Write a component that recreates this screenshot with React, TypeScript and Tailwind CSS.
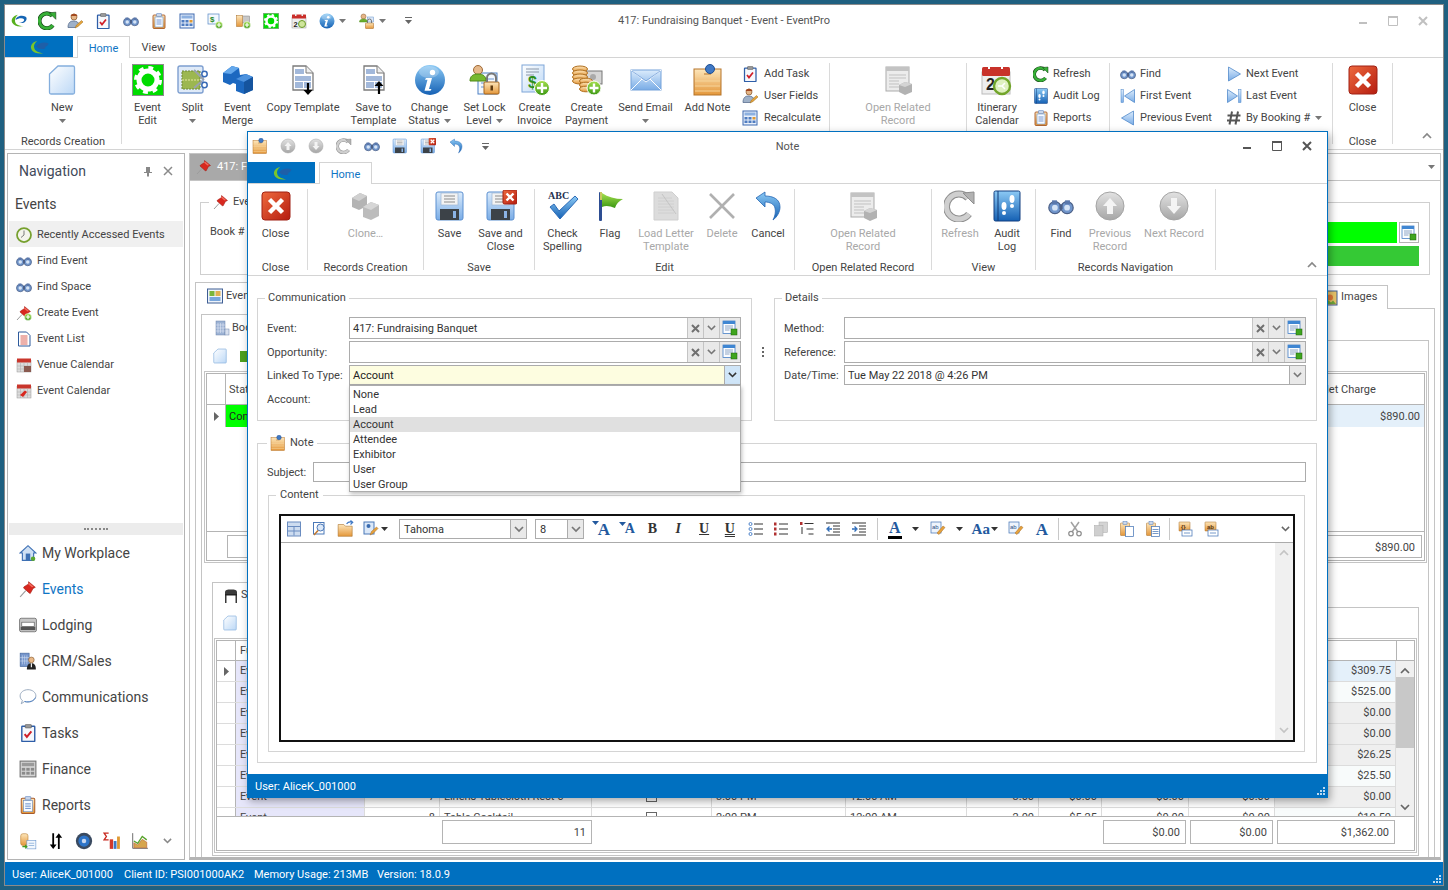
import React from "react";

type P = { s?: number };
type CP = P & { children?: React.ReactNode };
const Ic = ({ s = 32, children }: CP) => (
  <svg width={s} height={s} viewBox="0 0 32 32" className="block shrink-0">{children}</svg>
);

const Defs = () => (
  <svg className="absolute w-0 h-0">
    <defs>
      <linearGradient id="gB" x1="0" y1="0" x2="0" y2="1"><stop offset="0" stopColor="#dcecfc" /><stop offset="1" stopColor="#79ace6" /></linearGradient>
      <linearGradient id="gP" x1="0" y1="0" x2="1" y2="1"><stop offset="0" stopColor="#ffffff" /><stop offset="1" stopColor="#bcd8f6" /></linearGradient>
      <linearGradient id="gO" x1="0" y1="0" x2="0" y2="1"><stop offset="0" stopColor="#fde6bb" /><stop offset="1" stopColor="#e4973a" /></linearGradient>
      <linearGradient id="gR" x1="0" y1="0" x2="1" y2="1"><stop offset="0" stopColor="#ee6a3e" /><stop offset="1" stopColor="#b51c10" /></linearGradient>
      <linearGradient id="gG" x1="0" y1="0" x2="0" y2="1"><stop offset="0" stopColor="#e2e2e2" /><stop offset="1" stopColor="#a6a6a6" /></linearGradient>
      <linearGradient id="gD" x1="0" y1="0" x2="0" y2="1"><stop offset="0" stopColor="#8ccaf5" /><stop offset="1" stopColor="#1561b4" /></linearGradient>
      <linearGradient id="gN" x1="0" y1="0" x2="0" y2="1"><stop offset="0" stopColor="#a6e04e" /><stop offset="1" stopColor="#3a9712" /></linearGradient>
    </defs>
  </svg>
);

const PlusDot = ({ x = 24, y = 24, r = 7 }: { x?: number; y?: number; r?: number }) => (
  <g>
    <circle cx={x} cy={y} r={r} fill="url(#gN)" stroke="#fff" strokeWidth="1" />
    <path d={`M${x - r + 2.5} ${y}h${2 * r - 5}M${x} ${y - r + 2.5}v${2 * r - 5}`} stroke="#fff" strokeWidth="2.4" />
  </g>
);

const Logo = ({ s = 20 }: P) => (
  <svg width={s} height={s} viewBox="0 0 32 32" className="block shrink-0">
    <path d="M14 7C5 9 2 16 6 21c3 4 9 5 16 4-7-1-12-3-13-8-1-4 2-8 5-10z" fill="#7ac52c" />
    <path d="M12 15c3-5 12-7 18-4-1 3-3 4-5 5 1 2-1 3-4 3-4 0-7-1-9-4z" fill="#1e5fa8" />
  </svg>
);
const LogoQ = ({ s = 16 }: P) => (
  <svg width={s + 2} height={s} viewBox="0 0 32 28" className="block shrink-0">
    <path d="M14 3C5 5 1 12 4 17c3 5 10 8 20 6-9 0-14-3-15-8-1-5 2-9 5-12z" fill="#58b01e" />
    <path d="M10 12c1-6 10-9 17-6 4 2 3 7-1 10-3 2-7 2-10 1 3 0 8-1 9-4 1-2-1-4-5-4-4 0-7 1-10 3z" fill="#1565b4" />
  </svg>
);

const NewPage = ({ s = 32 }: P) => (
  <Ic s={s}><path d="M12 2h15a1.500 1.500 0 0 1 1.500 1.500v25a1.500 1.500 0 0 1-1.500 1.500H5a1.500 1.500 0 0 1-1.500-1.500V10z" fill="url(#gP)" stroke="#84aedd" strokeWidth="1.300" /></Ic>
);
const GearBox = ({ s = 32 }: P) => (
  <Ic s={s}>
    <rect x="0.500" y="0.500" width="31" height="31" fill="#00dc00" stroke="#8c8c8c" />
    <circle cx="16" cy="16" r="12" fill="none" stroke="#fff" strokeWidth="4" strokeDasharray="4.700 4.720" />
    <circle cx="16" cy="16" r="9" fill="#00dc00" stroke="#fff" strokeWidth="5" />
  </Ic>
);
const Split = ({ s = 32 }: P) => (
  <Ic s={s}>
    <rect x="1" y="2" width="25" height="27" rx="2" fill="#dfeaf8" stroke="#7e9fd0" strokeWidth="1.400" />
    <rect x="5" y="7" width="18" height="18" fill="#9cb750" stroke="#6f8a35" strokeDasharray="2 1" />
    <path d="M5 16h18" stroke="#e6e8a0" strokeDasharray="2 1" />
    <path d="M17 6l10 10M17 24l8-7" stroke="#9aa2ad" strokeWidth="2" />
    <circle cx="27.500" cy="10" r="2.700" fill="#fff" stroke="#3a6bb5" strokeWidth="1.500" />
    <circle cx="27.500" cy="21" r="2.700" fill="#fff" stroke="#3a6bb5" strokeWidth="1.500" />
  </Ic>
);
const Merge = ({ s = 32 }: P) => (
  <Ic s={s}>
    <path d="M1 9l9-7 7 2 1 7 6-1 7 3v13l-9 4-8-3v-7l-3-1-3 2-7-3z" fill="#1c68c0" />
    <path d="M1 9l9-7 7 2-8 6z" fill="#64a8ec" />
    <path d="M14 15l10-5 7 3-9 5z" fill="#4d92de" />
    <path d="M22 18l9-5v13l-9 4z" fill="#15549e" />
  </Ic>
);
const Tmpl = ({ s = 32, up = false }: P & { up?: boolean }) => (
  <Ic s={s}>
    <path d="M6 2h13l7 7v17H6z" fill="#fff" stroke="#7b7b7b" strokeWidth="1.300" />
    <path d="M19 2v7h7" fill="#eee" stroke="#7b7b7b" />
    <path d="M8 5h9v5H8zM8 12h16v5H8zM8 18h8v6H8zM17 18h7v6h-7z" fill="#a2b8da" />
    {up ? (
      <g><path d="M21 20v10" stroke="#000" strokeWidth="2.200" /><path d="M16.500 22l4.500-5 4.500 5z" fill="#000" /></g>
    ) : (
      <g><path d="M21 19v9" stroke="#000" strokeWidth="2.200" /><path d="M16.500 26l4.500 5 4.500-5z" fill="#000" /></g>
    )}
  </Ic>
);
const Info = ({ s = 32 }: P) => (
  <Ic s={s}>
    <circle cx="16" cy="16" r="15" fill="url(#gD)" />
    <ellipse cx="15" cy="8" rx="10" ry="6" fill="#fff" opacity=".25" />
    <circle cx="18.500" cy="8.500" r="2.700" fill="#fff" />
    <path d="M12 14h6l-3 11h2.500l-1 1.800H10.500l3-11H11z" fill="#fff" />
  </Ic>
);
const LockDoc = ({ s = 32 }: P) => (
  <Ic s={s}>
    <rect x="9" y="9" width="19" height="21" fill="#f4f8fd" stroke="#4c80c4" />
    <path d="M12 15h13M12 19h13M12 23h9" stroke="#6a97d4" />
    <circle cx="9" cy="6" r="4.500" fill="#e6b98b" stroke="#a06a36" />
    <path d="M1 17c0-5 3-7 8-7s8 2 8 7z" fill="#76b82e" stroke="#4f8a18" />
    <rect x="15" y="18" width="15" height="12" rx="1" fill="url(#gO)" stroke="#a4641c" />
    <path d="M18 18v-4a4.500 4.500 0 0 1 9 0v4" fill="none" stroke="#777" strokeWidth="2" />
    <rect x="21.500" y="21.500" width="2.500" height="5" fill="#5e3a10" />
  </Ic>
);
const Invoice = ({ s = 32 }: P) => (
  <Ic s={s}>
    <rect x="3" y="1" width="22" height="27" fill="url(#gP)" stroke="#7ea6d8" />
    <path d="M7 5h13M7 8h13M7 11h8" stroke="#8a97a8" />
    <text x="9" y="24" fontFamily="Liberation Sans" fontWeight="700" fontSize="16" fill="#2d8f1c">$</text>
    <PlusDot x={23} y={24} r={7.500} />
  </Ic>
);
const Payment = ({ s = 32 }: P) => (
  <Ic s={s}>
    <rect x="14" y="7" width="17" height="13" fill="#d6d6d6" stroke="#777" />
    <circle cx="22" cy="13" r="3" fill="#aaa" />
    {[3, 7, 11, 15].map((y) => <ellipse key={y} cx="9" cy={y + 2} rx="7.500" ry="3" fill="url(#gO)" stroke="#b06f1f" />)}
    {[15, 19, 23].map((y) => <ellipse key={y} cx="15" cy={y + 2} rx="6.500" ry="2.800" fill="url(#gO)" stroke="#b06f1f" />)}
    <PlusDot x={23} y={24} r={7} />
  </Ic>
);
const Mail = ({ s = 32 }: P) => (
  <Ic s={s}>
    <rect x="1" y="6" width="30" height="20" fill="url(#gB)" stroke="#74a2da" />
    <path d="M1 6l15 12L31 6M1 26l11-11M31 26L20 15" fill="none" stroke="#fff" strokeWidth="1" />
    <path d="M2 7l14 10L30 7" fill="none" stroke="#5f91d2" strokeWidth=".7" />
  </Ic>
);
const NoteIc = ({ s = 32 }: P) => (
  <Ic s={s}>
    <rect x="2" y="5" width="27" height="26" fill="url(#gO)" stroke="#b5752a" />
    <path d="M3 12h25M3 17h25M3 22h25M3 27h25" stroke="#f6d49a" />
    <path d="M12 10h7" stroke="#b5752a" />
    <circle cx="18" cy="5" r="4.500" fill="#3f78c4" stroke="#1e4e92" />
  </Ic>
);
const OpenRel = ({ s = 32 }: P) => (
  <Ic s={s}>
    <rect x="4" y="3" width="23" height="24" fill="#ececec" stroke="#ababab" />
    <rect x="4" y="3" width="23" height="4" fill="#c3c3c3" />
    <path d="M7 11h17M7 14h17M7 17h10M7 20h10M7 23h10" stroke="#c1c1c1" />
    <path d="M17 21l6-3 7 2v8l-7 3-6-3z" fill="#b2b2b2" />
    <path d="M17 21l6-3 7 2-7 3z" fill="#d4d4d4" />
  </Ic>
);
const Calendar = ({ s = 32 }: P) => (
  <Ic s={s}>
    <rect x="1" y="8" width="28" height="22" fill="#eee" stroke="#bbb" />
    <rect x="1" y="3" width="28" height="9" rx="1.500" fill="#c8322a" />
    <rect x="7" y="1" width="2" height="4" fill="#fff" /><rect x="20" y="1" width="2" height="4" fill="#fff" />
    <text x="5" y="26" fontFamily="Liberation Sans" fontWeight="700" fontSize="16" fill="#222">2</text>
    <circle cx="21" cy="22" r="8" fill="#dff0c0" stroke="#72a52a" strokeWidth="2.400" />
    <path d="M17 22h4l3-3M21 22l3 3" stroke="#fff" strokeWidth="1.500" fill="none" />
  </Ic>
);
const CloseIc = ({ s = 32 }: P) => (
  <Ic s={s}>
    <rect x="2" y="2" width="28" height="28" rx="3" fill="url(#gR)" stroke="#a02114" />
    <path d="M9.500 9.500l13 13M22.500 9.500l-13 13" stroke="#fff" strokeWidth="4.500" />
  </Ic>
);
const Clone = ({ s = 32 }: P) => (
  <Ic s={s}>
    <path d="M2 8l8-5 7 3v10l-8 4-7-3z" fill="#b4b4b4" /><path d="M2 8l8-5 7 3-8 5z" fill="#d0d0d0" />
    <path d="M13 17l8-5 8 3v11l-8 4-8-3z" fill="#bcbcbc" /><path d="M13 17l8-5 8 3-8 5z" fill="#d6d6d6" />
  </Ic>
);
const Floppy = ({ s = 32, x = false }: P & { x?: boolean }) => (
  <Ic s={s}>
    <rect x="2" y="2" width="27" height="28" rx="2" fill="url(#gB)" stroke="#5b8fd0" />
    <rect x="7" y="3" width="17" height="12" fill="#f3f3f3" stroke="#9cb5d3" strokeWidth=".7" />
    <path d="M10 6h11M10 9h11M10 12h11" stroke="#8b8b8b" />
    <rect x="6" y="19" width="19" height="11" fill="#3c4248" />
    <rect x="19" y="21" width="3" height="7" fill="#8cb4e6" />
    {x && <g><rect x="18" y="0" width="14" height="14" rx="1.500" fill="url(#gR)" stroke="#a02114" /><path d="M21.500 3.500l7 7M28.500 3.500l-7 7" stroke="#fff" strokeWidth="2.400" /></g>}
  </Ic>
);
const CheckAbc = ({ s = 32 }: P) => (
  <Ic s={s}>
    <text x="1" y="9" fontFamily="Liberation Serif" fontWeight="700" fontSize="10" fill="#26324f">ABC</text>
    <path d="M3 17l4-3 5 7L28 6l3 3-18 20z" fill="url(#gD)" stroke="#2d6cb8" />
  </Ic>
);
const Flag = ({ s = 32 }: P) => (
  <Ic s={s}>
    <rect x="5" y="2" width="3" height="29" rx="1" fill="#2d4d92" />
    <path d="M8 3c6 4 13 6 21 6-4 2-7 5-8 9-5-2-9-3-13-1z" fill="url(#gN)" />
    <path d="M6 2h2v8H6z" fill="#c7c860" />
  </Ic>
);
const LoadLetter = ({ s = 32 }: P) => (
  <Ic s={s}>
    <path d="M4 2h18l6 6v22H4z" fill="#dcdcdc" stroke="#cfcfcf" />
    <path d="M8 8h14M8 11h16M8 14h16M8 17h16M8 20h16M8 23h16" stroke="#cbcbcb" strokeWidth=".8" />
    <path d="M12 4l14 20" stroke="#c4c4c4" />
  </Ic>
);
const DelX = ({ s = 32 }: P) => (
  <Ic s={s}><path d="M4 4l24 24M28 4L4 28" stroke="#b0b0b0" strokeWidth="2.600" /></Ic>
);
const Undo = ({ s = 32 }: P) => (
  <Ic s={s}>
    <path d="M4 8l9-6v4c8 0 15 3 15 11 0 5-3 10-7 13 2-4 3-8 2-12-1-4-5-6-10-6v5z" fill="url(#gD)" stroke="#2566b4" strokeWidth=".8" />
  </Ic>
);
const Refresh = ({ s = 32, gray = false }: P & { gray?: boolean }) => (
  <Ic s={s}>
    <path d="M24 8a12.500 12.500 0 1 0 1 16" fill="none" stroke={gray ? "#8e8e8e" : "#133d13"} strokeWidth="7" />
    <path d="M24 8a12.500 12.500 0 1 0 1 16" fill="none" stroke={gray ? "#cfcfcf" : "#37b037"} strokeWidth="5" />
    <path d="M19 3l11-1v12z" fill={gray ? "#b2b2b2" : "#37b037"} stroke={gray ? "#8e8e8e" : "#133d13"} />
  </Ic>
);
const Book = ({ s = 32 }: P) => (
  <Ic s={s}>
    <rect x="3" y="1" width="26" height="30" rx="1.500" fill="url(#gD)" stroke="#123f80" />
    <path d="M7 1v30" stroke="#0e3a78" />
    <ellipse cx="13" cy="16" rx="2.500" ry="4" fill="#fff" /><circle cx="13" cy="23" r="2" fill="#fff" />
    <ellipse cx="21" cy="9" rx="2.500" ry="4" fill="#fff" /><circle cx="21" cy="16" r="2" fill="#fff" />
  </Ic>
);
const Binoc = ({ s = 32 }: P) => (
  <Ic s={s}>
    <circle cx="8.500" cy="18" r="7.500" fill="#7196cc" stroke="#4b5f86" strokeWidth="1.500" />
    <circle cx="23.500" cy="18" r="7.500" fill="#7196cc" stroke="#4b5f86" strokeWidth="1.500" />
    <circle cx="8.500" cy="18" r="3.500" fill="#d6e4f6" /><circle cx="23.500" cy="18" r="3.500" fill="#d6e4f6" />
    <rect x="5" y="9" width="6" height="5" fill="#5a78ac" /><rect x="21" y="9" width="6" height="5" fill="#5a78ac" />
    <rect x="14" y="14" width="4" height="6" fill="#4b5f86" />
  </Ic>
);
const Round = ({ s = 32, down = false }: P & { down?: boolean }) => (
  <Ic s={s}>
    <circle cx="16" cy="16" r="14" fill="url(#gG)" stroke="#a4a4a4" />
    <g transform={down ? "rotate(180 16 16)" : undefined}>
      <path d="M16 8l7 8h-4v8h-6v-8H9z" fill="#f4f4f4" />
    </g>
  </Ic>
);
const Task = ({ s = 16 }: P) => (
  <Ic s={s}>
    <rect x="5" y="4" width="23" height="27" rx="1" fill="#f6f8fc" stroke="#2e5ea8" strokeWidth="2.500" />
    <rect x="11" y="1" width="11" height="6" rx="1" fill="#999" stroke="#555" />
    <path d="M10 18l4 5 8-10" fill="none" stroke="#d0202a" strokeWidth="3.500" />
  </Ic>
);
const UserPen = ({ s = 16 }: P) => (
  <Ic s={s}>
    <circle cx="14" cy="8" r="6" fill="#e5b587" stroke="#8b5a2b" strokeWidth="1.500" />
    <path d="M7 6c2-6 12-6 14 0z" fill="#a3491f" />
    <path d="M2 29c0-9 4-13 11-13s10 3 11 7l-7 6z" fill="#9fb1c8" stroke="#546a8c" strokeWidth="1.500" />
    <path d="M16 30l3-6 10-9 3 3-10 9z" fill="#e8a63c" stroke="#9a6a1c" />
  </Ic>
);
const Calc = ({ s = 16, gray = false }: P & { gray?: boolean }) => {
  const c = gray ? "#777" : "#3d68b0";
  return (
    <Ic s={s}>
      <rect x="2" y="2" width="28" height="28" fill={gray ? "#d4d4d4" : "#eaf1fb"} stroke={c} strokeWidth="2" />
      <rect x="5" y="5" width="22" height="6" fill={gray ? "#9a9a9a" : "#8cb0e0"} />
      {[5, 13, 21].map((x) => [14, 21].map((y) => (
        <rect key={`${x}${y}`} x={x} y={y} width="6" height="5" fill={gray ? "#8a8a8a" : x === 21 && y === 14 ? "#e09a33" : "#4f7cc0"} />
      )))}
    </Ic>
  );
};
const Clip = ({ s = 16 }: P) => (
  <Ic s={s}>
    <rect x="4" y="4" width="24" height="27" rx="2" fill="url(#gO)" stroke="#a85a28" strokeWidth="1.800" />
    <rect x="8" y="8" width="16" height="20" fill="#f7fbff" stroke="#5680c0" />
    <rect x="11" y="1" width="10" height="6" rx="1" fill="#c9d6ea" stroke="#5680c0" />
    <path d="M11 14h10M11 18h10M11 22h10" stroke="#4d7ac4" strokeWidth="1.500" />
  </Ic>
);
const CashAdd = ({ s = 16 }: P) => (
  <Ic s={s}>
    <rect x="2" y="2" width="22" height="20" fill="#f4f8fd" stroke="#5f8ec8" strokeWidth="1.500" />
    <text x="6" y="18" fontFamily="Liberation Sans" fontWeight="700" fontSize="16" fill="#2b8a2b">$</text>
    <PlusDot x={24} y={24} r={7} />
  </Ic>
);
const CoinAdd = ({ s = 16 }: P) => (
  <Ic s={s}>
    <rect x="13" y="6" width="16" height="14" fill="#c8c8c8" stroke="#7c7c7c" />
    <rect x="3" y="5" width="12" height="22" fill="url(#gO)" stroke="#a86c24" />
    <PlusDot x={24} y={24} r={7} />
  </Ic>
);
const CalSm = ({ s = 16 }: P) => (
  <Ic s={s}>
    <rect x="2" y="8" width="28" height="22" fill="#eee" stroke="#999" />
    <rect x="2" y="3" width="28" height="8" rx="1" fill="#c92f2a" />
    <rect x="8" y="1" width="3" height="5" fill="#eee" /><rect x="21" y="1" width="3" height="5" fill="#eee" />
    <text x="5" y="27" fontFamily="Liberation Sans" fontWeight="700" fontSize="15" fill="#222">2</text>
    <circle cx="22" cy="22" r="7" fill="#cfe59c" stroke="#6c9c28" strokeWidth="2" />
  </Ic>
);
const UserLock = ({ s = 16 }: P) => (
  <Ic s={s}>
    <circle cx="9" cy="7" r="5" fill="#e5b587" stroke="#8b5a2b" />
    <path d="M1 18c0-4 3-6 8-6s8 2 8 6z" fill="#6aae2e" stroke="#4f8a18" />
    <rect x="17" y="8" width="12" height="10" fill="#dce8f8" stroke="#5f8ec8" />
    <rect x="13" y="20" width="16" height="11" rx="1" fill="url(#gO)" stroke="#a4641c" />
    <path d="M17 20v-4a4 4 0 0 1 8 0v4" fill="none" stroke="#777" strokeWidth="2" />
  </Ic>
);
const ClockRing = ({ s = 16 }: P) => (
  <Ic s={s}>
    <circle cx="16" cy="16" r="14" fill="#f4f4ec" stroke="#76a02e" strokeWidth="3.500" />
    <path d="M16 7v9l-6 5" fill="none" stroke="#7c7c7c" strokeWidth="2" />
  </Ic>
);
const Pin = ({ s = 16, plus = false }: P & { plus?: boolean }) => (
  <Ic s={s}>
    <path d="M2 30l10-11" stroke="#9c9c9c" strokeWidth="2" />
    <path d="M17 3l12 10-4 2-5 9-2-1-10-9 1-2 8-5z" fill="#d8281f" stroke="#9c1a12" />
    <path d="M18 5l8 7-3 1-7-6z" fill="#f26a5c" />
    {plus && <PlusDot x={24} y={24} r={7} />}
  </Ic>
);
const DocList = ({ s = 16 }: P) => (
  <Ic s={s}>
    <path d="M5 2h16l7 7v21H5z" fill="#fff" stroke="#2e5a9c" strokeWidth="2" />
    <path d="M9 10h14M9 14h14M9 18h14M9 22h14M9 26h14" stroke="#d23a2c" strokeWidth="1.600" />
  </Ic>
);
const CalGrid = ({ s = 16, red = false }: P & { red?: boolean }) => (
  <Ic s={s}>
    <rect x="2" y="7" width="28" height="23" fill="#dcdcdc" stroke="#999" />
    <rect x="2" y="3" width="28" height="8" fill="#c9362c" />
    <path d="M9 11v19M16 11v19M23 11v19M2 18h28M2 24h28" stroke="#aaa" />
    {red ? <path d="M8 24l10-9 4 3-8 10z" fill="#d8281f" /> : <rect x="16" y="18" width="14" height="12" fill="#8a5a50" />}
  </Ic>
);
const Home = ({ s = 18 }: P) => (
  <Ic s={s}>
    <path d="M2 16L16 3l14 13h-4v13H6V16z" fill="#cfe0f4" stroke="#3e70b4" strokeWidth="2" />
    <rect x="12" y="17" width="8" height="12" fill="#3e70b4" />
    <circle cx="25" cy="26" r="4" fill="#5aa830" />
  </Ic>
);
const Bed = ({ s = 18 }: P) => (
  <Ic s={s}>
    <rect x="1" y="4" width="30" height="24" rx="3" fill="#c7c7c7" stroke="#6e6e6e" strokeWidth="1.500" />
    <rect x="5" y="11" width="22" height="8" fill="#fff" stroke="#444" />
    <rect x="3" y="19" width="26" height="6" fill="#555" />
  </Ic>
);
const Crm = ({ s = 18 }: P) => (
  <Ic s={s}>
    <rect x="2" y="2" width="16" height="24" fill="#7696cc" stroke="#3e5e94" />
    <path d="M6 6v16M10 6v16M14 6v16M2 10h16M2 16h16" stroke="#d5e0f2" />
    <circle cx="22" cy="14" r="5" fill="#e8b888" stroke="#7d5024" />
    <path d="M14 31c0-8 3-11 8-11s8 3 8 11z" fill="#222" />
    <path d="M21 20h2v7h-2z" fill="#fff" />
  </Ic>
);
const Bubble = ({ s = 18 }: P) => (
  <Ic s={s}>
    <path d="M16 3c8 0 14 5 14 11s-6 11-14 11c-2 0-4 0-6-1l-6 4 2-6c-3-2-4-5-4-8C2 8 8 3 16 3z" fill="#fff" stroke="#8a9db4" strokeWidth="1.500" />
    <path d="M10 24c8 2 17-1 19-7" fill="none" stroke="#3f78c4" strokeWidth="1.500" />
  </Ic>
);
const Tri = ({ s = 16, dir = "r", bar = false }: P & { dir?: "l" | "r"; bar?: boolean }) => (
  <Ic s={s}>
    <g transform={dir === "l" ? "matrix(-1 0 0 1 32 0)" : undefined}>
      {bar && <rect x="25" y="3" width="5" height="26" fill="url(#gB)" stroke="#4a84c8" />}
      <path d={bar ? "M3 3l20 13L3 29z" : "M5 2l24 14L5 30z"} fill="url(#gB)" stroke="#4a84c8" strokeWidth="1.500" />
    </g>
  </Ic>
);
const Hash = ({ s = 16 }: P) => (
  <Ic s={s}><path d="M12 3L7 29M24 3l-5 26M3 11h26M2 21h26" stroke="#555" strokeWidth="4" /></Ic>
);
const ChartBars = ({ s = 18 }: P) => (
  <Ic s={s}>
    <rect x="12" y="13" width="6" height="17" fill="#d23a2c" /><rect x="19" y="16" width="5" height="14" fill="#3f78c4" /><rect x="25" y="8" width="5" height="22" fill="#e09a33" />
    <path d="M10 2H2l4 6-4 6h8" fill="none" stroke="#c8281f" strokeWidth="2.400" />
  </Ic>
);
const ChartLine = ({ s = 18 }: P) => (
  <Ic s={s}>
    <path d="M3 2v27h27" fill="none" stroke="#555" strokeWidth="1.500" />
    <path d="M5 28V19l7 4 8-10 8 5v10z" fill="#d6a64e" stroke="#b4562c" />
    <path d="M5 16l7 4 8-12 8 6" fill="none" stroke="#56a22a" strokeWidth="2.400" />
  </Ic>
);
const DbAdd = ({ s = 18 }: P) => (
  <Ic s={s}>
    <rect x="3" y="3" width="13" height="21" rx="4" fill="url(#gO)" stroke="#b5792a" />
    <rect x="14" y="15" width="16" height="15" fill="#f2f7fd" stroke="#5f8ec8" />
    <path d="M17 20h10M17 24h10" stroke="#5f8ec8" />
    <path d="M6 26h8M11 23l3 3-3 3" stroke="#3f9a20" strokeWidth="2" fill="none" />
  </Ic>
);
const Arrows = ({ s = 18 }: P) => (
  <Ic s={s}>
    <path d="M21 30V8M11 2v22" stroke="#000" strokeWidth="3.200" transform="translate(0 0)" />
    <path d="M15 10l6-8 6 8zM5 22l6 8 6-8z" fill="#000" />
  </Ic>
);
const Disc = ({ s = 18 }: P) => (
  <Ic s={s}>
    <circle cx="16" cy="16" r="14.500" fill="#3a4a60" />
    <circle cx="16" cy="16" r="10" fill="#2d74c8" />
    <circle cx="16" cy="16" r="4" fill="#c8d8f0" />
  </Ic>
);
const Lookup = () => (
  <Ic s={16}>
    <rect x="2" y="2" width="24" height="25" fill="#fafcff" stroke="#3b78c2" strokeWidth="1.500" />
    <rect x="2" y="2" width="24" height="6" fill="#3f86d2" />
    <path d="M6 12h16M6 16h16M6 20h9" stroke="#6a8ab2" strokeWidth="1.500" />
    <rect x="18" y="18" width="12" height="12" fill="#3fa51e" stroke="#1d5c0c" />
  </Ic>
);
const Chev = ({ c = "#666", up = false, w = 9 }: { c?: string; up?: boolean; w?: number }) => (
  <svg width={w} height={w * 0.7} viewBox="0 0 10 7" className="block shrink-0">
    <path d={up ? "M1 6l4-4 4 4" : "M1 1l4 4 4-4"} fill="none" stroke={c} strokeWidth="1.700" />
  </svg>
);
const Caret = ({ c = "#777" }: { c?: string }) => (
  <svg width="7" height="4" viewBox="0 0 7 4" className="block shrink-0"><path d="M0 0h7L3.500 4z" fill={c} /></svg>
);
const XBtn = () => (
  <svg width="9" height="9" viewBox="0 0 9 9" className="block"><path d="M1 1l7 7M8 1L1 8" stroke="#707070" strokeWidth="2" /></svg>
);
const WinCtl = ({ c }: { c: string }) => (
  <div className="flex">
    <div className="w-[30px] h-[16px] flex items-center justify-center">
      <svg width="10" height="10" viewBox="0 0 10 10" className="block"><rect x="1" y="6" width="8" height="2" fill={c} /></svg>
    </div>
    <div className="w-[30px] h-[16px] flex items-center justify-center">
      <svg width="10" height="10" viewBox="0 0 10 10" className="block"><path d="M.5.5h9v9h-9z" fill="none" stroke={c} /><rect x="0" y="0" width="10" height="2" fill={c} /></svg>
    </div>
    <div className="w-[30px] h-[16px] flex items-center justify-center">
      <svg width="10" height="10" viewBox="0 0 10 10" className="block"><path d="M1 1l8 8M9 1L1 9" stroke={c} strokeWidth="2" /></svg>
    </div>
  </div>
);

const RB = ({ w, icon, l1, l2, caret, dis }: { w: string; icon: React.ReactNode; l1: string; l2?: string; caret?: boolean; dis?: boolean }) => (
  <div className={`flex flex-col items-center pt-[6px] shrink-0 ${w} ${dis ? "text-[#a8a8a8]" : "text-[#444]"}`}>
    <div className="h-[32px] flex items-center justify-center">{icon}</div>
    <div className="mt-[5px] leading-[13px] whitespace-nowrap">{l1}</div>
    <div className="h-[13px] leading-[13px] flex items-center gap-[4px] whitespace-nowrap">{l2}{caret && <Caret />}</div>
  </div>
);
const Sep = () => <div className="w-px my-[5px] bg-[#dadada] shrink-0" />;
const Cap = ({ children, dis }: { children?: React.ReactNode; dis?: boolean }) => (
  <div className={`h-[17px] leading-[19px] text-center whitespace-nowrap ${dis ? "text-[#a8a8a8]" : "text-[#444]"}`}>{children}</div>
);
const SI = ({ icon, label, cls, caret }: { icon: React.ReactNode; label: string; cls: string; caret?: boolean }) => (
  <div className={`flex items-center h-[22px] text-[#444] whitespace-nowrap ${cls}`}>
    {icon}
    <span className="ml-[4px]">{label}</span>
    {caret && <span className="ml-[5px]"><Caret /></span>}
  </div>
);

const MainRibbon = () => (
  <div className="flex h-[92px] border-b border-[#d4d4d4] shrink-0">
    <div className="w-[116px] flex flex-col shrink-0">
      <div className="flex-1 flex justify-center pr-[2px]"><RB w="w-[60px]" icon={<NewPage />} l1="New" caret /></div>
      <Cap>Records Creation</Cap>
    </div>
    <Sep />
    <div className="w-[707px] shrink-0 flex pl-[3px]">
      <RB w="w-[45px]" icon={<GearBox />} l1="Event" l2="Edit" />
      <RB w="w-[45px]" icon={<Split />} l1="Split" caret />
      <RB w="w-[45px]" icon={<Merge />} l1="Event" l2="Merge" />
      <RB w="w-[86px]" icon={<Tmpl />} l1="Copy Template" />
      <RB w="w-[55px]" icon={<Tmpl up />} l1="Save to" l2="Template" />
      <RB w="w-[57px]" icon={<Info />} l1="Change" l2="Status" caret />
      <RB w="w-[53px]" icon={<LockDoc />} l1="Set Lock" l2="Level" caret />
      <RB w="w-[47px]" icon={<Invoice />} l1="Create" l2="Invoice" />
      <RB w="w-[57px]" icon={<Payment />} l1="Create" l2="Payment" />
      <RB w="w-[61px]" icon={<Mail />} l1="Send Email" caret />
      <RB w="w-[63px]" icon={<NoteIc />} l1="Add Note" />
      <div className="pt-[5px] flex flex-col">
        <SI cls="pl-[3px] gap-[2px]" icon={<Task s={16} />} label="Add Task" />
        <SI cls="pl-[3px] gap-[2px]" icon={<UserPen s={16} />} label="User Fields" />
        <SI cls="pl-[3px] gap-[2px]" icon={<Calc s={16} />} label="Recalculate" />
      </div>
    </div>
    <Sep />
    <div className="w-[136px] shrink-0 flex justify-center"><RB w="w-[100px]" dis icon={<OpenRel />} l1="Open Related" l2="Record" /></div>
    <Sep />
    <RB w="w-[60px]" icon={<Calendar />} l1="Itinerary" l2="Calendar" />
    <div className="w-[82px] shrink-0 pt-[5px] flex flex-col">
      <SI cls="pl-[6px]" icon={<Refresh s={16} />} label="Refresh" />
      <SI cls="pl-[6px]" icon={<Book s={16} />} label="Audit Log" />
      <SI cls="pl-[6px]" icon={<Clip s={16} />} label="Reports" />
    </div>
    <Sep />
    <div className="w-[112px] shrink-0 pt-[5px] flex flex-col">
      <SI cls="pl-[10px]" icon={<Binoc s={16} />} label="Find" />
      <SI cls="pl-[10px]" icon={<Tri s={16} dir="l" bar />} label="First Event" />
      <SI cls="pl-[10px]" icon={<Tri s={16} dir="l" />} label="Previous Event" />
    </div>
    <div className="w-[110px] shrink-0 pt-[5px] flex flex-col">
      <SI cls="pl-[4px]" icon={<Tri s={16} />} label="Next Event" />
      <SI cls="pl-[4px]" icon={<Tri s={16} bar />} label="Last Event" />
      <SI cls="pl-[4px]" icon={<Hash s={16} />} label="By Booking #" caret />
    </div>
    <Sep />
    <div className="w-[59px] shrink-0 flex flex-col items-center">
      <div className="flex-1"><RB w="w-[59px]" icon={<CloseIc />} l1="Close" /></div>
      <Cap>Close</Cap>
    </div>
    <Sep />
    <div className="flex-1 flex items-end justify-end pb-[10px] pr-[11px]"><Chev c="#888" up w={10} /></div>
  </div>
);

const navTop: [React.ReactNode, string][] = [
  [<ClockRing s={16} />, "Recently Accessed Events"],
  [<Binoc s={16} />, "Find Event"],
  [<Binoc s={16} />, "Find Space"],
  [<Pin s={16} plus />, "Create Event"],
  [<DocList s={16} />, "Event List"],
  [<CalGrid s={16} />, "Venue Calendar"],
  [<CalGrid s={16} red />, "Event Calendar"],
];
const navBottom: [React.ReactNode, string][] = [
  [<Home />, "My Workplace"],
  [<Pin s={18} />, "Events"],
  [<Bed />, "Lodging"],
  [<Crm />, "CRM/Sales"],
  [<Bubble />, "Communications"],
  [<Task s={18} />, "Tasks"],
  [<Calc s={18} gray />, "Finance"],
  [<Clip s={18} />, "Reports"],
];

const Nav = () => (
  <div className="w-[178px] shrink-0 border border-[#b4b4b4] bg-white flex flex-col">
    <div className="h-[34px] flex items-center pl-[11px] text-[14px] text-[#3f4a5a]">
      <span className="flex-1">Navigation</span>
      <svg width="10" height="11" viewBox="0 0 10 11" className="block mr-[10px]"><path d="M3 1h4v5h2v1H6v3.500H4V7H1V6h2z" fill="#888" /></svg>
      <svg width="10" height="10" viewBox="0 0 10 10" className="block mr-[11px]"><path d="M1 1l8 8M9 1L1 9" stroke="#8a8a8a" strokeWidth="1.500" /></svg>
    </div>
    <div className="h-[33px] flex items-center pl-[7px] text-[14px] text-[#444]">Events</div>
    {navTop.map(([ic, t], i) => (
      <div key={t} className={`h-[26px] mx-[1px] pl-[7px] pt-[2px] flex items-center ${i === 0 ? "bg-[#f0f0f0]" : ""} text-[#444]`}>
        {ic}
        <span className="ml-[5px] whitespace-nowrap">{t}</span>
      </div>
    ))}
    <div className="flex-1" />
    <div className="h-[12px] mx-[1px] bg-[#ececec] flex items-center justify-center">
      <div className="w-[24px] h-[2px] border-t-2 border-dotted border-[#888]" />
    </div>
    {navBottom.map(([ic, t]) => (
      <div key={t} className={`h-[36px] pl-[11px] flex items-center text-[14px] ${t === "Events" ? "text-[#0f75c4]" : "text-[#444]"}`}>
        {ic}
        <span className="ml-[5px] whitespace-nowrap">{t}</span>
      </div>
    ))}
    <div className="h-[36px] pl-[6px] flex items-center">
      {[<DbAdd />, <Arrows />, <Disc />, <ChartBars />, <ChartLine />].map((n, i) => (
        <div key={i} className="w-[28px] flex justify-center">{n}</div>
      ))}
      <div className="w-[26px] flex justify-center"><Chev c="#888" /></div>
    </div>
  </div>
);

const rowBg = ["bg-[#e4f0fa]", "bg-[#f8fbfb]", "bg-[#efefef]", "bg-[#efefef]", "bg-[#efefef]", "bg-[#f8fbfb]", "bg-[#efefef]", "bg-[#f8fbfb]"];
const rowData = [
  ["1", "", "", "", "", "", "$0.00", "$0.00", "$0.00", "$309.75"],
  ["2", "", "", "", "", "", "$0.00", "$0.00", "$0.00", "$525.00"],
  ["3", "", "", "", "", "", "$0.00", "$0.00", "$0.00", "$0.00"],
  ["4", "", "", "", "", "", "$0.00", "$0.00", "$0.00", "$0.00"],
  ["5", "", "", "", "", "", "$0.00", "$0.00", "$0.00", "$26.25"],
  ["6", "", "", "", "", "", "$0.00", "$0.00", "$0.00", "$25.50"],
  ["7", "Linens Tablecloth Rect 6", "3:00 PM", "12:00 AM", "3.00", "$0.00", "$0.00", "$0.00", "$0.00", "$0.00"],
  ["8", "Table Cocktail", "2:00 PM", "12:00 AM", "2.00", "$5.25", "$0.00", "$0.00", "$0.00", "$10.50"],
];
const Cell = ({ w, r, children }: { w: string; r?: boolean; children?: React.ReactNode }) => (
  <div className={`${w} shrink-0 px-[4px] overflow-hidden whitespace-nowrap border-r border-[#dcdcdc] leading-[19px] ${r ? "text-right" : ""}`}>{children}</div>
);
const LowerGrid = () => (
  <div className="flex-1 border border-[#b4b4b4] flex flex-col min-h-0 text-[#444]">
    <div className="h-[20px] flex border-b border-[#b4b4b4] shrink-0 leading-[19px]">
      <div className="w-[19px] border-r border-[#b4b4b4]" />
      <div className="pl-[4px] w-[1160px]">Function</div>
      <div className="w-[18px] border-l border-[#b4b4b4]" />
    </div>
    <div className="h-[155px] flex overflow-hidden shrink-0">
      <div className="w-[1179px] shrink-0">
        {rowData.map((r, i) => (
          <div key={i} className="h-[21px] flex border-b border-[#dcdcdc]">
            <div className="w-[19px] flex items-center justify-center shrink-0 border-r border-[#b4b4b4]">
              {i === 0 && <svg width="5" height="9" viewBox="0 0 5 9" className="block"><path d="M0 0l5 4.500L0 9z" fill="#666" /></svg>}
            </div>
            <Cell w="w-[129px] bg-[#e6e6fa]">Event</Cell>
            <Cell w="w-[75px]" r>{r[0]}</Cell>
            <Cell w="w-[152px]">{r[1]}</Cell>
            <Cell w="w-[120px]">
              {r[1] && <div className="w-[11px] h-[11px] border border-[#666] mx-auto mt-[4px]" />}
            </Cell>
            <Cell w="w-[134px]">{r[2]}</Cell>
            <Cell w="w-[121px]">{r[3]}</Cell>
            <Cell w="w-[72px]" r>{r[4]}</Cell>
            <Cell w="w-[63px]" r>{r[5]}</Cell>
            <Cell w="w-[87px]" r>{r[6]}</Cell>
            <Cell w="w-[86px]" r>{r[7]}</Cell>
            <Cell w={`w-[121px] ${rowBg[i]}`} r>{r[9]}</Cell>
          </div>
        ))}
      </div>
      <div className="w-[18px] shrink-0 bg-[#f0f0f0] flex flex-col items-center pt-[6px]">
        <Chev c="#666" up w={10} />
        <div className="w-full h-[71px] bg-[#c8c8c8] mt-[3px]" />
        <div className="flex-1" />
        <div className="pb-[5px]"><Chev c="#666" w={10} /></div>
      </div>
    </div>
    <div className="flex-1 border-t border-[#b4b4b4] flex items-start pt-[3px]">
      <div className="w-[225px] shrink-0" />
      <div className="w-[150px] shrink-0 h-[24px] border border-[#b4b4b4] text-right pr-[5px] leading-[24px]">11</div>
      <div className="w-[511px] shrink-0" />
      <div className="w-[83px] shrink-0 h-[24px] border border-[#b4b4b4] text-right pr-[5px] leading-[24px]">$0.00</div>
      <div className="w-[83px] ml-[4px] shrink-0 h-[24px] border border-[#b4b4b4] text-right pr-[5px] leading-[24px]">$0.00</div>
      <div className="w-[118px] ml-[4px] shrink-0 h-[24px] border border-[#b4b4b4] text-right pr-[5px] leading-[24px]">$1,362.00</div>
    </div>
  </div>
);

const TabIco = () => (
  <Ic s={16}>
    <rect x="1" y="2" width="30" height="28" fill="#eef3fa" stroke="#3e5e94" strokeWidth="2" />
    <rect x="5" y="6" width="10" height="10" fill="#79b53a" /><rect x="17" y="6" width="10" height="10" fill="#e0b050" />
    <rect x="5" y="18" width="22" height="8" fill="#78a6dc" />
  </Ic>
);
const Building = () => (
  <Ic s={16}>
    <rect x="4" y="2" width="18" height="28" fill="#9db3d4" stroke="#6d85ac" />
    <path d="M8 6v20M13 6v20M18 6v20M4 10h18M4 16h18M4 22h18" stroke="#e8eef8" />
    <rect x="22" y="18" width="8" height="12" fill="#d8e0ee" stroke="#6d85ac" />
  </Ic>
);
const Chair = () => (
  <Ic s={16}>
    <path d="M4 8c0-4 4-5 12-5s12 1 12 5v22h-3V14H7v16H4z" fill="#3a3a3a" />
    <rect x="4" y="12" width="24" height="3" fill="#222" />
  </Ic>
);
const PicIco = () => (
  <Ic s={16}>
    <rect x="2" y="2" width="28" height="28" fill="#e9c46a" stroke="#3e5e94" strokeWidth="2" />
    <circle cx="16" cy="15" r="6" fill="#e07a3a" />
    <path d="M4 28l8-8 6 5 4-4 6 7z" fill="#6fa83a" />
  </Ic>
);

const DocArea = () => (
  <div className="flex-1 min-w-0 flex flex-col border border-[#c4c4c4] border-b-[3px] border-b-[#b4b4b4] text-[#444]">
    <div className="h-[27px] shrink-0 flex border-b border-[#c4c4c4]">
      <div className="w-[112px] bg-[#a9a9a9] flex items-center pl-[6px] gap-[4px] text-white whitespace-nowrap overflow-hidden"><Pin s={16} /><span className="ml-[1px]">417: Fundraising</span></div>
      <div className="flex-1 flex items-center justify-end pr-[5px]"><Caret c="#777" /></div>
    </div>
    <div className="flex-1 flex flex-col px-[5px] min-h-0">
      <div className="relative mt-[21px] ml-[5px] mr-[5px] h-[73px] border border-[#cfcfcf] shrink-0 flex">
        <div className="absolute -top-[9px] left-[8px] bg-white px-[4px] flex items-center gap-[4px]"><Pin s={16} /><span>Event</span></div>
        <div className="pl-[9px] pt-[21px]">Book #</div>
        <div className="flex-1" />
        <div className="flex flex-col gap-[3px] pt-[19px] pr-[10px] w-[300px]">
          <div className="h-[21px] flex gap-[2px]"><div className="flex-1 bg-[#00ff00]" /><div className="w-[20px] border border-[#b4b4b4] flex items-center justify-center"><Lookup /></div></div>
          <div className="h-[20px] bg-[#35c935]" />
        </div>
      </div>
      <div className="mt-[7px] h-[26px] shrink-0 flex">
        <div className="border border-[#c4c4c4] border-b-0 bg-white w-[80px] flex items-center pl-[11px] gap-[3px] h-[27px] relative"><TabIco /><span>Event</span></div>
        <div className="flex-1" />
        <div className="mt-[3px] h-[24px] w-[78px] border border-[#c4c4c4] border-b-0 bg-white relative flex items-center pl-[11px] gap-[3px] mr-[47px]"><PicIco /><span>Images</span></div>
      </div>
      <div className="flex-1 min-h-0 border border-[#c4c4c4] border-b-0 px-[5px] pt-[5px] flex flex-col">
        <div className="h-[26px] shrink-0 flex">
          <div className="border border-[#c4c4c4] border-b-0 w-[80px] h-[27px] bg-white relative flex items-center pl-[12px] gap-[2px]"><Building /><span>Bookings</span></div>
        </div>
        <div className="flex-1 min-h-0 border border-[#c4c4c4] border-b-0 pl-[2px] pr-[1px] flex flex-col">
          <div className="h-[30px] shrink-0 flex items-center pl-[8px] gap-[11px]">
            <NewPage s={16} />
            <svg width="16" height="16" viewBox="0 0 16 16" className="block"><rect x="1" y="3" width="14" height="11" fill="#4da01e" /></svg>
          </div>
          <div className="h-[192px] shrink-0 border border-[#c4c4c4] p-px">
            <div className="h-full border-t border-x border-[#b4b4b4] flex flex-col">
              <div className="h-[31px] flex border-b border-[#b4b4b4] leading-[31px]">
                <div className="w-[19px] border-r border-[#b4b4b4]" />
                <div className="pl-[3px] flex-1">Status</div>
                <div className="w-[107px] pl-[4px]">Net Charge</div>
              </div>
              <div className="h-[22px] flex">
                <div className="w-[19px] border-r border-[#b4b4b4] flex items-center justify-center"><svg width="5" height="9" viewBox="0 0 5 9" className="block"><path d="M0 0l5 4.500L0 9z" fill="#666" /></svg></div>
                <div className="w-[100px] bg-[#00ff00] pl-[3px] leading-[23px] text-[#222]">Confirmed</div>
                <div className="flex-1" />
                <div className="w-[107px] bg-[#e4f0fa] text-right pr-[4px] leading-[23px]">$890.00</div>
              </div>
              <div className="flex-1" />
              <div className="h-[30px] border-y border-[#b4b4b4] flex items-center pl-[20px] pr-[2px] mb-0">
                <div className="w-[300px] h-[23px] border border-[#b4b4b4]" />
                <div className="flex-1" />
                <div className="w-[120px] h-[23px] border border-[#b4b4b4] text-right pr-[6px] leading-[23px]">$890.00</div>
              </div>
            </div>
          </div>
          <div className="mt-[19px] h-[25px] shrink-0 flex ml-[8px]">
            <div className="border border-[#c4c4c4] border-b-0 w-[80px] h-[26px] bg-white relative flex items-center pl-[10px] gap-[2px]"><Chair /><span>Spaces</span></div>
          </div>
          <div className="flex-1 min-h-0 ml-[8px] mr-[8px] border-x border-t border-b border-[#c4c4c4] flex flex-col px-px mb-[1px]">
            <div className="h-[30px] shrink-0 flex items-center pl-[8px]"><NewPage s={16} /></div>
            <div className="flex-1 min-h-0 border border-[#c4c4c4] flex flex-col p-px mb-[2px]"><LowerGrid /></div>
          </div>
        </div>
      </div>
    </div>
  </div>
);

const FieldBtns = () => (
  <>
    <div className="w-[16px] bg-[#e9e9e9] border-l border-[#c4c4c4] flex items-center justify-center"><XBtn /></div>
    <div className="w-[16px] bg-[#e9e9e9] border-l border-[#c4c4c4] flex items-center justify-center"><Chev c="#777" /></div>
    <div className="w-[21px] bg-[#e9e9e9] border-l border-[#c4c4c4] flex items-center justify-center"><Lookup /></div>
  </>
);
const Field = ({ value, label, lw }: { value?: string; label: string; lw: string }) => (
  <div className="flex h-[22px] mb-[2px] items-center">
    <div className={`${lw} shrink-0 whitespace-nowrap pt-[3px]`}>{label}</div>
    <div className="flex-1 h-full flex border border-[#acacac] bg-white">
      <div className="flex-1 pl-[3px] leading-[22px] text-[#333]">{value}</div>
      <FieldBtns />
    </div>
  </div>
);
const GroupCap = ({ children }: { children: React.ReactNode }) => (
  <div className="absolute -top-[8px] left-[7px] bg-white px-[3px] leading-[14px] flex items-center">{children}</div>
);

const ToolBtn = ({ w = "w-[25.8px]", children }: { w?: string; children: React.ReactNode }) => (
  <div className={`${w} shrink-0 flex items-center justify-center h-full`}>{children}</div>
);
const TbSep = () => <div className="w-px h-[22px] bg-[#c8c8c8] shrink-0" />;
const G = ({ children, cls = "" }: { children: string; cls?: string }) => (
  <span className={`[font-family:'Liberation_Serif',serif] font-bold leading-none ${cls}`}>{children}</span>
);
const Combo = ({ w, t }: { w: string; t: string }) => (
  <div className={`${w} shrink-0 h-[20px] border border-[#acacac] flex`}>
    <div className="flex-1 pl-[4px] leading-[20px] text-[#333]">{t}</div>
    <div className="w-[16px] bg-[#e9e9e9] border-l border-[#acacac] flex items-center justify-center"><Chev c="#777" w={10} /></div>
  </div>
);
const ListIc = ({ num = false }: { num?: boolean }) => (
  <Ic s={16}>
    {[6, 16, 26].map((y) => (num
      ? <rect key={y} x="2" y={y - 3} width="5" height="6" fill="#b03030" />
      : <circle key={y} cx="5" cy={y} r="3" fill="#fff" stroke="#3f78c4" strokeWidth="1.800" />))}
    <path d="M12 6h18M12 16h18M12 26h18" stroke="#333" strokeWidth="2" />
  </Ic>
);
const Indent = ({ r = false }: { r?: boolean }) => (
  <Ic s={16}>
    <path d="M2 4h28M16 10h14M16 16h14M16 22h14M2 28h28" stroke="#333" strokeWidth="2" />
    <g transform={r ? undefined : "matrix(-1 0 0 1 16 0)"}><path d="M2 16h8M7 11l5 5-5 5" stroke="#2e6cb8" strokeWidth="2.600" fill="none" /></g>
  </Ic>
);
const Scissors = () => (
  <Ic s={16}>
    <path d="M8 2l14 20M24 2L10 22" stroke="#a2a2a2" strokeWidth="3" />
    <circle cx="8" cy="25" r="4.500" fill="none" stroke="#909090" strokeWidth="2.500" /><circle cx="24" cy="25" r="4.500" fill="none" stroke="#909090" strokeWidth="2.500" />
  </Ic>
);
const CopyGray = () => (
  <Ic s={16}><rect x="12" y="2" width="17" height="21" fill="#d4d4d4" stroke="#aaa" /><rect x="3" y="9" width="17" height="21" fill="#cfcfcf" stroke="#aaa" /></Ic>
);
const PasteIc = ({ list = false }: { list?: boolean }) => (
  <Ic s={16}>
    <rect x="3" y="4" width="18" height="25" rx="1" fill="url(#gO)" stroke="#a86c24" />
    <rect x="8" y="1" width="8" height="6" fill="#ccd8ea" stroke="#5680c0" />
    <rect x="13" y="11" width="16" height="20" fill="#fff" stroke="#4a78b8" strokeWidth="1.500" />
    {list && <path d="M15 17h12M15 21h12M15 25h12" stroke="#4a78b8" strokeWidth="1.500" />}
  </Ic>
);
const FieldDoc = ({ t }: { t: string }) => (
  <Ic s={16}>
    <rect x="2" y="2" width="22" height="18" rx="1" fill="url(#gO)" stroke="#a86c24" />
    <text x="6" y="15" fontFamily="Liberation Sans" fontSize="12" fontWeight="700" fill="#553311">{t}</text>
    <rect x="8" y="18" width="20" height="12" fill="#fff" stroke="#4a78b8" strokeWidth="1.500" />
    <path d="M12 24h12" stroke="#4a78b8" strokeWidth="1.500" />
  </Ic>
);
const AbPen = () => (
  <Ic s={16}>
    <rect x="2" y="2" width="20" height="22" fill="#eef4fc" stroke="#4a78b8" strokeWidth="1.500" />
    <text x="4" y="16" fontFamily="Liberation Sans" fontSize="12" fill="#2b4f86">ab</text>
    <path d="M14 24l12-14 4 3-12 14z" fill="#e6a23c" stroke="#a86c24" />
  </Ic>
);

const EditorToolbar = () => (
  <div className="h-[27px] shrink-0 flex items-center border-b border-[#ababab] text-[#333]">
    <ToolBtn w="w-[26px]"><Ic s={16}><rect x="3" y="2" width="26" height="28" fill="#cddcf0" stroke="#6a8cc0" strokeWidth="2" /><path d="M3 11h26M3 20h26M16 11v18" stroke="#6a8cc0" strokeWidth="2" /></Ic></ToolBtn>
    <ToolBtn w="w-[26px]"><Ic s={16}><rect x="3" y="3" width="21" height="23" fill="#fff" stroke="#4a78b8" strokeWidth="2" /><circle cx="17" cy="13" r="7" fill="#dbe8f8" stroke="#4a78b8" strokeWidth="2" /><path d="M12 19l-8 9" stroke="#c2762a" strokeWidth="3" /></Ic></ToolBtn>
    <ToolBtn w="w-[26px]"><Ic s={18}><path d="M2 8h10l3 3h12v18H2z" fill="url(#gO)" stroke="#a86c24" /><path d="M17 7c3-4 7-4 10-3M24 1l4 3-4 4" fill="none" stroke="#3f78c4" strokeWidth="2" /></Ic></ToolBtn>
    <ToolBtn w="w-[24px]"><Ic s={16}><rect x="2" y="2" width="20" height="24" fill="#dbe8f8" stroke="#4a78b8" strokeWidth="2" /><circle cx="11" cy="10" r="4" fill="#3a6cb0" /><path d="M14 28l3-7 10-9 3 3-10 10z" fill="#e6a23c" stroke="#a86c24" /></Ic></ToolBtn>
    <div className="-ml-[2px] mr-[11px]"><Caret c="#333" /></div>
    <Combo w="w-[128px]" t="Tahoma" />
    <div className="w-[8px] shrink-0" />
    <Combo w="w-[49px]" t="8" />
    <div className="w-[4px] shrink-0" />
    <ToolBtn><span className="flex items-start text-[#23599e]"><Caret c="#23599e" /><G cls="text-[17px] -ml-[1px]">A</G></span></ToolBtn>
    <ToolBtn><span className="flex items-start text-[#23599e]"><Caret c="#23599e" /><G cls="text-[14px] -ml-[1px]">A</G></span></ToolBtn>
    <ToolBtn><G cls="text-[14px] text-[#333]">B</G></ToolBtn>
    <ToolBtn><G cls="text-[14px] italic text-[#333]">I</G></ToolBtn>
    <ToolBtn><G cls="text-[14px] underline text-[#333]">U</G></ToolBtn>
    <ToolBtn><G cls="text-[14px] underline decoration-double text-[#333]">U</G></ToolBtn>
    <ToolBtn><ListIc /></ToolBtn>
    <ToolBtn><ListIc num /></ToolBtn>
    <ToolBtn><Ic s={16}><rect x="2" y="2" width="5" height="6" fill="#b03030" /><path d="M11 5h18M15 16h14M19 26h10M6 12v14" stroke="#333" strokeWidth="2" /></Ic></ToolBtn>
    <ToolBtn><Indent /></ToolBtn>
    <ToolBtn><Indent r /></ToolBtn>
    <div className="w-[5px] shrink-0" />
    <TbSep />
    <div className="w-[8px] shrink-0" />
    <ToolBtn w="w-[18px]"><div className="flex flex-col items-center"><G cls="text-[16px] text-[#23599e]">A</G><div className="w-[14px] h-[3px] bg-black" /></div></ToolBtn>
    <ToolBtn w="w-[24px]"><Caret c="#333" /></ToolBtn>
    <ToolBtn w="w-[20px]"><AbPen /></ToolBtn>
    <ToolBtn w="w-[24px]"><Caret c="#333" /></ToolBtn>
    <ToolBtn w="w-[18px]"><G cls="text-[15px] text-[#23599e]">Aa</G></ToolBtn>
    <ToolBtn w="w-[10px]"><Caret c="#333" /></ToolBtn>
    <div className="w-[3px] shrink-0" />
    <ToolBtn w="w-[26px]"><AbPen /></ToolBtn>
    <ToolBtn w="w-[26px]"><G cls="text-[17px] text-[#23599e]">A</G></ToolBtn>
    <div className="w-[3px] shrink-0" />
    <TbSep />
    <div className="w-[3px] shrink-0" />
    <ToolBtn w="w-[26px]"><Scissors /></ToolBtn>
    <ToolBtn w="w-[26px]"><CopyGray /></ToolBtn>
    <ToolBtn w="w-[26px]"><PasteIc /></ToolBtn>
    <ToolBtn w="w-[26px]"><PasteIc list /></ToolBtn>
    <div className="w-[3px] shrink-0" />
    <TbSep />
    <div className="w-[3px] shrink-0" />
    <ToolBtn w="w-[26px]"><FieldDoc t="{}" /></ToolBtn>
    <ToolBtn w="w-[26px]"><FieldDoc t="ab" /></ToolBtn>
    <div className="flex-1 flex justify-end pr-[3px]"><Chev c="#666" /></div>
  </div>
);

const Modal = () => (
  <div className="absolute left-[247px] top-[131px] w-[1081px] h-[667px] border border-[#0070c0] bg-white flex flex-col shadow-[2px_3px_8px_rgba(0,0,0,0.35)] text-[#444]">
    <div className="h-[30px] shrink-0 pb-[2px] grid grid-cols-[1fr_auto_1fr] items-center">
      <div className="flex items-center -ml-[2px]">
        {[<NoteIc s={16} />, <Round s={16} />, <Round s={16} down />, <Refresh s={16} gray />, <Binoc s={16} />, <Floppy s={16} />, <Floppy s={16} x />, <Undo s={16} />].map((n, i) => (
          <div key={i} className="w-[28px] flex justify-center">{n}</div>
        ))}
        <div className="ml-[12px] flex flex-col items-center gap-[2px]"><div className="w-[7px] h-px bg-[#666]" /><Caret c="#666" /></div>
      </div>
      <div className="text-[#555] pt-[2px]">Note</div>
      <div className="flex justify-end pr-[5px]"><WinCtl c="#555" /></div>
    </div>
    <div className="h-[22px] shrink-0 flex border-b border-[#d4d4d4]">
      <div className="w-[67px] h-[21px] bg-[#0070c0] flex items-center justify-center"><Logo s={22} /></div>
      <div className="ml-[4px] w-[53px] h-[22px] pt-[4px] border border-b-0 border-[#d4d4d4] bg-white text-[#0f75c4] flex items-center justify-center">Home</div>
    </div>
    <div className="h-[92px] shrink-0 flex border-b border-[#d4d4d4]">
      <div className="w-[59px] shrink-0 flex flex-col">
        <div className="flex-1"><RB w="w-[55px]" icon={<CloseIc />} l1="Close" /></div>
        <div className="w-[55px]"><Cap>Close</Cap></div>
      </div>
      <Sep />
      <div className="w-[115px] shrink-0 flex flex-col">
        <div className="flex-1 flex justify-center"><RB w="w-[60px]" dis icon={<Clone />} l1="Clone…" /></div>
        <Cap>Records Creation</Cap>
      </div>
      <Sep />
      <div className="w-[110px] shrink-0 flex flex-col">
        <div className="flex-1 flex">
          <RB w="w-[51px]" icon={<Floppy />} l1="Save" />
          <RB w="w-[51px]" icon={<Floppy x />} l1="Save and" l2="Close" />
        </div>
        <Cap>Save</Cap>
      </div>
      <Sep />
      <div className="w-[259px] shrink-0 flex flex-col">
        <div className="flex-1 flex pl-[1px]">
          <RB w="w-[53px]" icon={<CheckAbc />} l1="Check" l2="Spelling" />
          <RB w="w-[42px]" icon={<Flag />} l1="Flag" />
          <RB w="w-[70px]" dis icon={<LoadLetter />} l1="Load Letter" l2="Template" />
          <RB w="w-[42px]" dis icon={<DelX />} l1="Delete" />
          <RB w="w-[50px]" icon={<Undo />} l1="Cancel" />
        </div>
        <Cap>Edit</Cap>
      </div>
      <Sep />
      <div className="w-[136px] shrink-0 flex flex-col">
        <div className="flex-1 flex justify-center"><RB w="w-[90px]" dis icon={<OpenRel />} l1="Open Related" l2="Record" /></div>
        <Cap>Open Related Record</Cap>
      </div>
      <Sep />
      <div className="w-[103px] shrink-0 flex flex-col">
        <div className="flex-1 flex pl-[5px]">
          <RB w="w-[46px]" dis icon={<Refresh gray />} l1="Refresh" />
          <RB w="w-[48px]" icon={<Book />} l1="Audit" l2="Log" />
        </div>
        <Cap>View</Cap>
      </div>
      <Sep />
      <div className="w-[179px] shrink-0 flex flex-col">
        <div className="flex-1 flex">
          <RB w="w-[50px]" icon={<Binoc s={26} />} l1="Find" />
          <RB w="w-[48px]" dis icon={<Round />} l1="Previous" l2="Record" />
          <RB w="w-[80px]" dis icon={<Round down />} l1="Next Record" />
        </div>
        <Cap>Records Navigation</Cap>
      </div>
      <Sep />
      <div className="flex-1 flex items-end justify-end pb-[7px] pr-[10px]"><Chev c="#888" up w={10} /></div>
    </div>
    <div className="flex-1 min-h-0 pl-[9px] pt-[22px]">
      <div className="flex h-[123px]">
        <div className="relative w-[495px] border border-[#d4d4d4] pl-[9px] pr-[10px] pt-[18px]">
          <GroupCap>Communication</GroupCap>
          <Field label="Event:" lw="w-[82px]" value="417: Fundraising Banquet" />
          <Field label="Opportunity:" lw="w-[82px]" />
          <div className="flex h-[20px] items-center">
            <div className="w-[82px] shrink-0 whitespace-nowrap pt-[2px]">Linked To Type:</div>
            <div className="relative flex-1 h-full flex border border-[#acacac] bg-[#fdfde0]">
              <div className="flex-1 pl-[3px] leading-[20px] text-[#222]">Account</div>
              <div className="w-[16px] bg-[#cfe5f8] border-l border-[#acacac] flex items-center justify-center"><Chev c="#333" /></div>
              <div className="absolute left-[-1px] right-[-1px] top-[19px] h-[107px] border border-[#acacac] bg-white shadow-[1px_2px_4px_rgba(0,0,0,0.25)] z-10 pt-px text-[#333]">
                {["None", "Lead", "Account", "Attendee", "Exhibitor", "User", "User Group"].map((t) => (
                  <div key={t} className={`h-[15px] leading-[15px] pl-[3px] ${t === "Account" ? "bg-[#e0e0e0]" : ""}`}>{t}</div>
                ))}
              </div>
            </div>
          </div>
          <div className="mt-[7px] leading-[16px]">Account:</div>
        </div>
        <div className="w-[22px] flex flex-col items-center pt-[49px] gap-[2px]">
          {[0, 1, 2].map((i) => <div key={i} className="w-[2px] h-[2px] bg-[#666]" />)}
        </div>
        <div className="relative w-[543px] border border-[#d4d4d4] pl-[9px] pr-[10px] pt-[18px]">
          <GroupCap>Details</GroupCap>
          <Field label="Method:" lw="w-[60px]" />
          <Field label="Reference:" lw="w-[60px]" />
          <div className="flex h-[20px] items-center">
            <div className="w-[60px] shrink-0 pt-[2px]">Date/Time:</div>
            <div className="flex-1 h-full flex border border-[#acacac]">
              <div className="flex-1 pl-[3px] leading-[20px] text-[#333]">Tue May 22 2018 @ 4:26 PM</div>
              <div className="w-[16px] bg-[#e9e9e9] border-l border-[#acacac] flex items-center justify-center"><Chev c="#777" /></div>
            </div>
          </div>
        </div>
      </div>
      <div className="relative mt-[22px] w-[1060px] h-[320px] border border-[#d4d4d4] pl-[9px] pt-[18px]">
        <div className="absolute -top-[9px] left-[9px] bg-white px-[3px] flex items-center gap-[4px] leading-[14px]"><NoteIc s={16} /><span>Note</span></div>
        <div className="flex h-[20px] items-center pr-[10px]">
          <div className="w-[46px] shrink-0 pt-[3px]">Subject:</div>
          <div className="flex-1 h-full border border-[#acacac]" />
        </div>
        <div className="relative mt-[13px] ml-[1px] w-[1037px] h-[257px] border border-[#d4d4d4] pl-[10px] pt-[18px]">
          <GroupCap><span className="px-[1px]">Content</span></GroupCap>
          <div className="w-[1016px] h-[228px] border-2 border-[#111] flex flex-col">
            <EditorToolbar />
            <div className="flex-1 flex justify-end">
              <div className="w-[18px] bg-[#f0f0f0] flex flex-col items-center justify-between py-[6px]">
                <Chev c="#c4c4c4" up w={10} />
                <Chev c="#c4c4c4" w={10} />
              </div>
            </div>
          </div>
        </div>
      </div>
    </div>
    <div className="h-[23px] shrink-0 pt-[3px] bg-[#0070c0] text-white flex items-center pl-[7px] relative">
      User: AliceK_001000
      <Grip />
    </div>
  </div>
);
const Grip = () => (
  <svg width="9" height="9" viewBox="0 0 9 9" className="absolute right-[2px] bottom-[2px] block">
    {[[7, 7], [4, 7], [1, 7], [7, 4], [4, 4], [7, 1]].map(([x, y]) => <rect key={`${x}${y}`} x={x} y={y} width="2" height="2" fill="#bcd9f0" />)}
  </svg>
);

export default function App() {
  return (
    <div className="relative w-[1448px] h-[890px] overflow-hidden bg-[#1f6080] p-[4px] [font-family:Roboto,'Liberation_Sans',Arial,sans-serif] text-[11px]">
      <Defs />
      <div className="h-full border border-[#8a8a8a] bg-white flex flex-col">
        <div className="h-[31px] shrink-0 grid grid-cols-[1fr_auto_1fr] items-center">
          <div className="flex items-center">
            {[<LogoQ />, <Refresh s={19} />, <UserPen />, <Task />, <Binoc s={16} />, <Clip />, <Calc />, <CashAdd />, <CoinAdd />, <GearBox s={16} />, <CalSm />, <Info s={16} />].map((n, i) => (
              <div key={i} className="w-[28px] flex justify-center">{n}</div>
            ))}
            <div className="-ml-[3px] w-[8px] flex justify-center"><Caret /></div>
            <div className="ml-[7px] w-[28px] flex justify-center"><UserLock /></div>
            <div className="-ml-[3px] w-[8px] flex justify-center"><Caret /></div>
            <div className="ml-[18px] w-[8px] flex flex-col items-center gap-[2px]"><div className="w-[7px] h-px bg-[#666]" /><Caret c="#666" /></div>
          </div>
          <div className="text-[#555] pt-[2px]">417: Fundraising Banquet - Event - EventPro</div>
          <div className="flex justify-end pr-[5px]"><WinCtl c="#c0c0c0" /></div>
        </div>
        <div className="h-[22px] shrink-0 flex border-b border-[#d4d4d4] text-[#444]">
          <div className="w-[68px] h-[21px] bg-[#0070c0] flex items-center justify-center"><Logo s={22} /></div>
          <div className="ml-[4px] w-[53px] h-[22px] pt-[4px] border border-b-0 border-[#d4d4d4] bg-white text-[#0f75c4] flex items-center justify-center">Home</div>
          <div className="w-[47px] pt-[4px] flex items-center justify-center">View</div>
          <div className="w-[53px] pt-[4px] flex items-center justify-center">Tools</div>
        </div>
        <MainRibbon />
        <div className="flex-1 min-h-0 flex pt-[3px] pb-[2px] pl-[2px] pr-[2px] gap-[4px]">
          <Nav />
          <DocArea />
        </div>
        <div className="h-[23px] shrink-0 pt-[3px] bg-[#0070c0] text-white flex items-center pl-[7px] relative">
          <span className="w-[112px]">User: AliceK_001000</span>
          <span className="w-[130px]">Client ID: PSI001000AK2</span>
          <span className="w-[123px]">Memory Usage: 213MB</span>
          <span>Version: 18.0.9</span>
          <Grip />
        </div>
      </div>
      <Modal />
    </div>
  );
}
